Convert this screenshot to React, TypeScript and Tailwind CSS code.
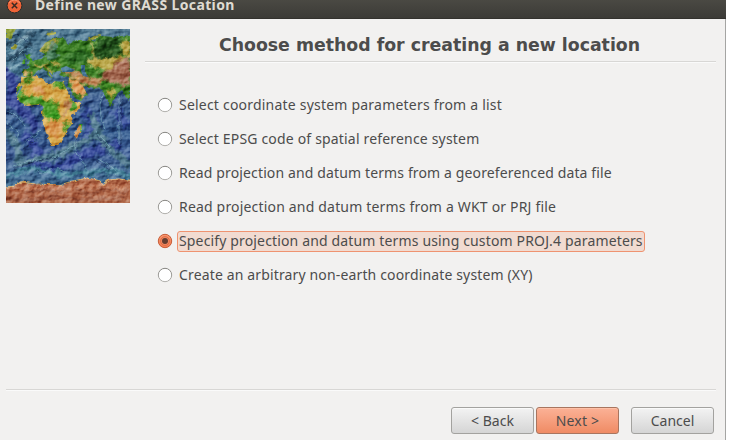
import React from "react";

type Option = { label: string; spacing: string; selected?: boolean };

const options: Option[] = [
  { label: "Select coordinate system parameters from a list", spacing: "tracking-[0.21px]" },
  { label: "Select EPSG code of spatial reference system", spacing: "tracking-[0.18px]" },
  { label: "Read projection and datum terms from a georeferenced data file", spacing: "tracking-[0.13px]" },
  { label: "Read projection and datum terms from a WKT or PRJ file", spacing: "tracking-[0.18px]" },
  { label: "Specify projection and datum terms using custom PROJ.4 parameters", spacing: "tracking-[0.15px]", selected: true },
  { label: "Create an arbitrary non-earth coordinate system (XY)", spacing: "tracking-[0.145px]" },
];

function ReliefMap() {
  return (
    <svg width="124" height="174" viewBox="0 0 124 174" className="block shrink-0">
      <defs>
        <linearGradient id="sea" x1="0" y1="0" x2="0" y2="1">
          <stop offset="0" stopColor="#4f7891" />
          <stop offset=".25" stopColor="#44718c" />
          <stop offset=".4" stopColor="#3a5a8c" />
          <stop offset=".6" stopColor="#345a8c" />
          <stop offset=".72" stopColor="#38568e" />
          <stop offset="1" stopColor="#487b92" />
        </linearGradient>
        <filter id="rough" x="-5%" y="-5%" width="110%" height="110%" colorInterpolationFilters="sRGB">
          <feTurbulence type="fractalNoise" baseFrequency=".22" numOctaves="3" seed="4" />
          <feDisplacementMap in="SourceGraphic" scale="4" xChannelSelector="R" yChannelSelector="G" />
        </filter>
        <filter id="soft" x="-20%" y="-20%" width="140%" height="140%" colorInterpolationFilters="sRGB">
          <feGaussianBlur stdDeviation="1" result="b" />
          <feTurbulence type="fractalNoise" baseFrequency=".16" numOctaves="3" seed="9" result="n" />
          <feDisplacementMap in="b" in2="n" scale="9" xChannelSelector="R" yChannelSelector="G" />
        </filter>
        <filter id="relief" x="0" y="0" width="100%" height="100%" colorInterpolationFilters="sRGB">
          <feTurbulence type="fractalNoise" baseFrequency=".1 .13" numOctaves="4" seed="12" result="n" />
          <feColorMatrix in="n" values="0 0 0 0 0  0 0 0 0 0  0 0 0 0 0  1 0 0 0 0" result="h" />
          <feDiffuseLighting in="h" surfaceScale="2.4" diffuseConstant="1" lightingColor="#ffffff">
            <feDistantLight azimuth="225" elevation="33" />
          </feDiffuseLighting>
        </filter>
        <clipPath id="frame"><rect width="124" height="174" /></clipPath>
        <clipPath id="africa">
          <path d="M11 57 17 48 32 47 36 49 38 53 45 55 50 52 58 53 61 60 66 70 69 74 76 73 72 81 65 87 66 95 61 101 57 111 51 117 45 117 41 106 37 94 36 82 38 78 34 75 22 77 14 73 10 67Z" />
        </clipPath>
        <clipPath id="eurasia">
          <path d="M17 47 17 40 25 39 24 35 30 31 37 29 39 25 33 22 39 14 48 9 59 9 61 16 69 11 78 11 88 12 94 7 108 8 124 6V72L119 66 116 61 112 64 107 73 104 78 99 67 95 60 83 58 77 57 81 65 75 71 69 69 62 56 63 48 53 46 57 41 46 44 46 49 42 45 36 39 31 42 26 48Z" />
        </clipPath>
      </defs>
      <g clipPath="url(#frame)">
        <rect width="124" height="174" fill="url(#sea)" />
        <g filter="url(#soft)" fill="none">
          <path d="M-4 43 8 52 5 72 20 83 31 100" stroke="#354592" strokeWidth="11" />
          <path d="M17 103 33 123 22 137 53 139 79 125 115 115" stroke="#354897" strokeWidth="9" />
          <path d="M78 82 88 92 82 112M109 80 121 98" stroke="#344a96" strokeWidth="11" />
          <path d="M0 102 12 117 12 135 30 130 51 127 66 118 79 113 93 102 84 84M92 106 108 124 124 137" stroke="#4a7388" strokeWidth="7" />
          <path d="M0 147 25 139 58 146 104 141 124 147" stroke="#4b879d" strokeWidth="5" />
          <path d="M0 17 12 12 27 3M3 30 15 23 24 14" stroke="#29485f" strokeWidth="4" />
          <path d="M4 25 13 17 19 6M2 41 15 34" stroke="#8ab7c5" strokeWidth="1.5" />
        </g>
        <g filter="url(#rough)" fill="none" stroke="#77a9b7" strokeWidth=".9" opacity=".7">
          <path d="M1 81 10 86 19 97M1 94 12 103 9 113M19 113 36 101M7 137 21 132 43 130 55 125 70 114M70 102 69 121 81 139M90 103 104 117 102 125M98 65 94 75 95 88 99 101M113 66V116M92 130 99 134 107 139 111 145M30 141 35 145 46 139M51 138 60 143M2 22 10 20 13 12 22 8M7 31 17 21 26 19" />
        </g>
        <g filter="url(#rough)" fill="none" stroke="#243e66" strokeWidth=".8">
          <path d="M2 83 10 89M17 120 33 109M8 139 28 133 52 128M70 105 70 118M91 106 102 119M115 67V115M90 132 104 140M0 10 11 5 22 13" />
        </g>
        <g filter="url(#rough)">
          <path d="M0 0 9 0 5 10 0 11Z" fill="#8b9c36" />
          <path d="M5 17 10 16 12 19 5 20ZM40 4 50 3 50 5 42 7ZM79 12 88 7 95 6 94 8 82 13Z" fill="#9ea03f" />
          <path d="M19 26 24 24 26 31 29 35 21 37 23 31ZM16 31 20 30 19 35 15 35Z" fill="#459125" />
          <path d="M17 47 17 40 25 39 24 35 30 31 37 29 39 25 33 22 39 14 48 9 59 9 61 16 69 11 78 11 88 12 94 7 108 8 124 6V72L119 66 116 61 112 64 107 73 104 78 99 67 95 60 83 58 77 57 81 65 75 71 69 69 62 56 63 48 53 46 57 41 46 44 46 49 42 45 36 39 31 42 26 48Z" fill="#3b7d24" />
          <path d="M11 57 17 48 32 47 36 49 38 53 45 55 50 52 58 53 61 60 66 70 69 74 76 73 72 81 65 87 66 95 61 101 57 111 51 117 45 117 41 106 37 94 36 82 38 78 34 75 22 77 14 73 10 67Z" fill="#d3a345" />
        </g>
        <g clipPath="url(#eurasia)">
          <g filter="url(#soft)">
            <path d="M91 8 117 9 113 19 116 26 98 29 85 33 89 21Z" fill="#204e1a" />
            <path d="M55 27 75 20 87 27 84 34 65 35Z" fill="#2b6921" />
            <path d="M116 12 124 12V28L114 25ZM79 32 108 27 124 29V42L103 42 83 37Z" fill="#b9a649" />
            <path d="M96 43 107 39 110 32 124 27V58L110 54 94 50Z" fill="#a46951" />
            <path d="M53 42 70 42 81 47 96 50 91 58 78 54 65 47Z" fill="#b87d4e" />
            <path d="M62 49 71 50 80 59 79 66 72 69 67 62Z" fill="#dc9b56" />
            <path d="M96 51 107 55 112 62 104 65 98 60Z" fill="#37801e" />
            <path d="M101 60 109 61 105 72Z" fill="#b89d3c" />
            <path d="M17 41 25 41 24 46 18 46Z" fill="#c4904a" />
            <path d="M32 23 44 12 51 10 48 14 39 22ZM86 14 88 31" stroke="#c2a34b" strokeWidth="2" fill="none" />
            <path d="M29 37 39 36 44 43 47 48M45 34 53 35" stroke="#c6a147" strokeWidth="2.5" fill="none" />
          </g>
          <path d="M75 36 79 36 79 42 82 48 77 47 75 42ZM55 39 60 37 69 41 66 43 55 43Z" fill="#467797" />
        </g>
        <path d="m45 12-3 8-2 7 2 4 8-1 6-4-5-1-2-4 3-6Z" fill="#527e86" opacity=".55" filter="url(#rough)" />
        <g clipPath="url(#africa)">
          <g filter="url(#soft)">
            <path d="M10 59 15 67 28 67 44 71 53 76 48 88 38 89 33 77 15 75Z" fill="#4a9928" />
            <path d="M38 83 51 82 55 89 42 92Z" fill="#389820" />
            <path d="M17 49 29 48 27 52 17 56Z" fill="#57952b" />
            <path d="M44 53 59 54 59 59 46 57Z" fill="#459222" />
            <path d="M65 69 71 75 67 83 63 78ZM56 94 65 94 60 104ZM11 58 18 60 14 71 10 66Z" fill="#3d9426" />
            <path d="M61 68 65 75 61 83 54 92 58 82 59 74Z" fill="#b77e50" />
            <path d="M43 93 58 93 52 109 45 109 39 97Z" fill="#d7954d" />
            <path d="M28 58 35 57 40 66 34 65 29 62Z" fill="#d59357" />
          </g>
        </g>
        <path d="M58 53 63 63 68 72M43 43 50 52M16 57 10 67" stroke="#3d678c" strokeWidth="1.5" fill="none" />
        <g filter="url(#rough)">
          <path d="M73 96 76 96 74 104 71 109 69 106Z" fill="#d09350" />
          <path d="M73 96 76 95 74 103" stroke="#44a62a" strokeWidth="1" fill="none" />
          <path d="M105 73 108 75 106 77Z" fill="#50912c" />
          <path d="M-4 159 9 157 15 153 29 156 48 155 58 156 67 152 82 149 94 152 97 156 103 151 113 150 128 153V180H-4Z" fill="#b06849" />
          <path d="M-4 159 9 157 15 153 29 155 53 156 67 152 82 149 94 152 97 156 103 151 113 150 128 153" stroke="#d9ad69" strokeWidth="1.2" fill="none" />
        </g>
        <g filter="url(#soft)" fill="none" strokeWidth="2">
          <path d="M19 165 35 160 52 163 67 159 83 165 104 159 122 164" stroke="#93533e" />
          <path d="M0 170 24 171 46 168 77 171 120 169" stroke="#925440" />
          <path d="M3 162 17 158 39 158 55 160 84 157 119 158" stroke="#cd8460" />
        </g>
        <rect width="124" height="174" filter="url(#relief)" className="mix-blend-soft-light" />
      </g>
    </svg>
  );
}

function Radio({ selected }: { selected?: boolean }) {
  return (
    <svg width="16" height="16" viewBox="0 0 16 16" className="shrink-0">
      <defs>
        <linearGradient id="radioRim" x1="0" y1="0" x2="0" y2="1">
          <stop offset="0" stopColor="#858480" />
          <stop offset="1" stopColor="#b1b0ac" />
        </linearGradient>
        <linearGradient id="radioOn" x1="0" y1="0" x2="0" y2="1">
          <stop offset="0" stopColor="#fa9a73" />
          <stop offset="1" stopColor="#f07a4f" />
        </linearGradient>
      </defs>
      <circle cx="8" cy="8" r="6.7" fill={selected ? "url(#radioOn)" : "#fff"} stroke={selected ? "#c75d38" : "url(#radioRim)"} />
      {selected && <><circle cx="8" cy="8" r="4.4" fill="#f38a62" stroke="#d96640" strokeWidth=".8" /><circle cx="8" cy="8" r="3" fill="#653d30" /></>}
    </svg>
  );
}

function Button({ children, primary }: { children: React.ReactNode; primary?: boolean }) {
  return (
    <button
      className={`flex h-[27px] w-[83px] items-center justify-center rounded-[3px] border text-[14px] leading-5 ${
        primary
          ? "border-[#a8755f] bg-linear-to-b from-[#fbb196] to-[#ef8b64] shadow-[inset_0_1px_0_#ffc0a7]"
          : "border-[#a3a29f] bg-linear-to-b from-[#f3f3f3] to-[#d5d5d5] shadow-[inset_0_1px_0_#fafafa]"
      }`}
    >
      <span className={primary ? "tracking-[0.2px]" : ""}>{children}</span>
    </button>
  );
}

export default function App() {
  return (
    <div className="h-[440px] w-[734px] overflow-hidden bg-white font-['Noto_Sans','Open_Sans',sans-serif] text-[#4c4c4c]">
      <div className="flex h-full w-[726px] flex-col border-r border-[#a5a5a3] bg-[#f2f1f0]">
        <header className="-mr-px flex h-[19px] shrink-0 items-start overflow-hidden border-b border-[#33322e] bg-linear-to-b from-[#4a4943] to-[#3c3b37] pl-[6px]">
          <svg width="17" height="17" viewBox="0 0 17 17" className="-mt-[3px] shrink-0">
            <circle cx="8.5" cy="8.5" r="7.4" fill="#ee6337" stroke="#2f2e2a" />
            <path d="M3 6Q8 0 14 6" stroke="#f49370" fill="none" />
            <path d="m5.8 5.8 5.4 5.4m0-5.4-5.4 5.4" stroke="#3b2a22" strokeWidth="1.5" />
          </svg>
          <h2 className="-mt-[5px] ml-[12px] whitespace-nowrap text-[14px] font-bold leading-5 tracking-[0.37px] text-[#dfdbd2]">Define new GRASS Location</h2>
        </header>
        <main className="flex h-[370px] shrink-0 pl-[6px] pt-[10px]">
          <ReliefMap />
          <section className="ml-[15px] w-[571px]">
            <h1 className="flex h-[33px] items-center justify-center whitespace-nowrap border-b border-[#d8d7d5] pr-[2px] pt-px font-['DejaVu_Sans',sans-serif] text-[17.33px] font-bold shadow-[0_1px_0_#fafafa]">Choose method for creating a new location</h1>
            <div className="pl-[12px] pt-[26px]">
              {options.map(({ label, spacing, selected }) => (
                <label key={label} className="flex h-[34px] items-center">
                  <Radio selected={selected} />
                  <span className={`ml-[4px] flex h-[21px] items-center whitespace-nowrap rounded-[3px] border px-px text-[14px] leading-none ${spacing} ${selected ? "w-[468px] border-[#ef9370] bg-[#f1dbd1]" : "border-transparent"}`}>
                    <span>{label}</span>
                  </span>
                </label>
              ))}
            </div>
          </section>
        </main>
        <footer className="ml-[6px] mr-[9px] flex border-t border-[#d8d7d5] pt-[17px] shadow-[inset_0_1px_0_#fafafa]">
          <div className="ml-auto flex gap-[2px] pr-[2px]"><Button>&lt; Back</Button><Button primary>Next &gt;</Button><div className="ml-[10px]"><Button>Cancel</Button></div></div>
        </footer>
      </div>
    </div>
  );
}
